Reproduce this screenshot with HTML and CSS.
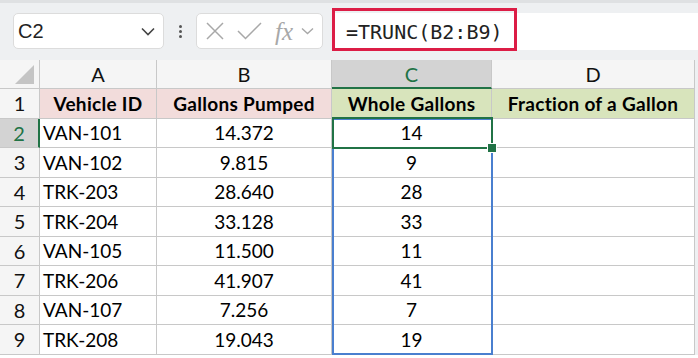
FILE: index.html
```
<!DOCTYPE html>
<html lang="en">
<head>
    <meta charset="UTF-8">
    <title>TRUNC</title>
    <link rel="stylesheet" href="styles.css">
</head>
<body>
    <div class="toolbar">
        <div class="namebox">
            <span>C2</span>
            <svg class="chev" width="14" height="9" viewBox="0 0 14 9"><path d="M1 1.5 L7 7.5 L13 1.5" fill="none" stroke="#444" stroke-width="1.6"/></svg>
        </div>
        <div class="dots"><i></i><i></i><i></i></div>
        <div class="fnbox">
            <svg width="20" height="20" viewBox="0 0 20 20"><path d="M2 2 L18 18 M18 2 L2 18" stroke="#a8a8a8" stroke-width="1.5"/></svg>
            <svg width="25" height="20" viewBox="0 0 25 20"><path d="M1 10 L8.5 17.5 L24 2" fill="none" stroke="#a8a8a8" stroke-width="1.5"/></svg>
            <span class="fx">fx</span>
            <svg width="13" height="8" viewBox="0 0 13 8"><path d="M1 1.5 L6.5 6.5 L12 1.5" fill="none" stroke="#a8a8a8" stroke-width="1.4"/></svg>
        </div>
        <div class="formula">
            <span>=TRUNC(B2:B9)</span>
            <div class="hl"></div>
        </div>
    </div>

    <div class="sheet">
        <div class="corner"><svg width="22" height="22" viewBox="0 0 22 22"><path d="M20 1 L20 20 L1 20 Z" fill="#c4c4c4"/></svg></div>
        <div class="colhd">A</div>
        <div class="colhd">B</div>
        <div class="colhd sel">C</div>
        <div class="colhd">D</div>
        <div class="filler"></div>

        <div class="rowhd">1</div>
        <div class="cell th pink">Vehicle ID</div>
        <div class="cell th pink">Gallons Pumped</div>
        <div class="cell th green">Whole Gallons</div>
        <div class="cell th green">Fraction of a Gallon</div>
        <div class="filler"></div>

        <div class="rowhd sel">2</div>
        <div class="cell l">VAN-101</div>
        <div class="cell">14.372</div>
        <div class="cell">14</div>
        <div class="cell"></div>
        <div class="filler"></div>

        <div class="rowhd">3</div>
        <div class="cell l">VAN-102</div>
        <div class="cell">9.815</div>
        <div class="cell">9</div>
        <div class="cell"></div>
        <div class="filler"></div>

        <div class="rowhd">4</div>
        <div class="cell l">TRK-203</div>
        <div class="cell">28.640</div>
        <div class="cell">28</div>
        <div class="cell"></div>
        <div class="filler"></div>

        <div class="rowhd">5</div>
        <div class="cell l">TRK-204</div>
        <div class="cell">33.128</div>
        <div class="cell">33</div>
        <div class="cell"></div>
        <div class="filler"></div>

        <div class="rowhd">6</div>
        <div class="cell l">VAN-105</div>
        <div class="cell">11.500</div>
        <div class="cell">11</div>
        <div class="cell"></div>
        <div class="filler"></div>

        <div class="rowhd">7</div>
        <div class="cell l">TRK-206</div>
        <div class="cell">41.907</div>
        <div class="cell">41</div>
        <div class="cell"></div>
        <div class="filler"></div>

        <div class="rowhd">8</div>
        <div class="cell l">VAN-107</div>
        <div class="cell">7.256</div>
        <div class="cell">7</div>
        <div class="cell"></div>
        <div class="filler"></div>

        <div class="rowhd">9</div>
        <div class="cell l">TRK-208</div>
        <div class="cell">19.043</div>
        <div class="cell">19</div>
        <div class="cell"></div>
        <div class="filler"></div>

        <div class="spill"></div>
        <div class="active"><b></b></div>
    </div>
</body>
</html>
```

FILE: styles.css
```
*{
    margin: 0;
    padding: 0;
    box-sizing: border-box;
}
body{
    width: 698px;
    height: 358px;
    overflow: hidden;
    background: #fff;
    font-family: Lato, "Open Sans", sans-serif;
    color: #000;
}
.toolbar{
    height: 60px;
    background: #eef0f2;
    border-top: 3px solid #dfe1e3;
    display: flex;
    align-items: flex-start;
    padding: 10px 0 0 13px;
}
.namebox{
    width: 151px;
    height: 36px;
    background: #fff;
    border: 1px solid #dcdcdc;
    border-radius: 5px;
    display: flex;
    align-items: center;
    justify-content: space-between;
    padding: 0 8px 0 4px;
    font-family: "Liberation Sans", sans-serif;
    font-size: 20px;
    color: #222;
}
.dots{
    width: 32px;
    height: 36px;
    display: flex;
    flex-direction: column;
    align-items: center;
    justify-content: center;
    gap: 2px;
}
.dots i{
    width: 3px;
    height: 3px;
    border-radius: 50%;
    background: #555;
}
.fnbox{
    width: 127px;
    height: 36px;
    background: #fff;
    border: 1px solid #dcdcdc;
    border-radius: 5px;
    display: flex;
    align-items: center;
    padding: 0 0 0 8px;
    gap: 12px;
}
.fx{
    font-family: "Liberation Serif", serif;
    font-style: italic;
    font-size: 25px;
    color: #a8a8a8;
    margin-left: 1px;
    margin-right: -4px;
    line-height: 1;
}
.formula{
    position: relative;
    margin-left: 9px;
    flex: 1;
    height: 37px;
    background: #fff;
    display: flex;
    align-items: center;
    padding-left: 14px;
    font-family: "DejaVu Sans Mono", monospace;
    font-size: 20px;
    color: #222;
}
.hl{
    position: absolute;
    left: 0;
    top: -5px;
    width: 185px;
    height: 43px;
    border: 3px solid #dc1d46;
}
.sheet{
    position: relative;
    display: grid;
    grid-template-columns: 40px 117px 175px 160px 203px 3px;
    grid-template-rows: 29px repeat(9, 29.5px);
    font-size: 19px;
}
.corner{
    background: #f5f5f5;
    border-right: 1px solid #c8c8c8;
    border-bottom: 1px solid #c8c8c8;
    display: flex;
    align-items: flex-end;
    justify-content: flex-end;
    padding: 0 3px 2px 0;
}
.colhd{
    background: #f5f5f5;
    border-right: 1px solid #c8c8c8;
    border-bottom: 1px solid #c8c8c8;
    display: flex;
    align-items: center;
    justify-content: center;
    font-size: 20px;
    color: #111;
}
.colhd.sel{
    background: #d3d3d3;
    color: #217346;
    border-bottom: 2px solid #217346;
}
.rowhd{
    background: #f5f5f5;
    border-right: 1px solid #c8c8c8;
    border-bottom: 1px solid #c8c8c8;
    display: flex;
    align-items: center;
    justify-content: center;
    font-size: 20px;
    color: #111;
}
.rowhd.sel{
    background: #d3d3d3;
    color: #217346;
    border-right: 2px solid #217346;
}
.filler{
    background: #eef0f2;
}
.cell{
    border-right: 1px solid #c8c8c8;
    border-bottom: 1px solid #c8c8c8;
    display: flex;
    align-items: center;
    justify-content: center;
    white-space: nowrap;
}
.cell.l{
    justify-content: flex-start;
    padding-left: 3px;
}
.th{
    font-weight: bold;
    letter-spacing: 0.3px;
}
.pink{
    background: #f2dcdb;
}
.green{
    background: #d8e4bc;
}
.spill{
    position: absolute;
    left: 332px;
    top: 58px;
    width: 161px;
    height: 237px;
    border: 2px solid #4a7fcf;
    pointer-events: none;
}
.active{
    position: absolute;
    left: 332px;
    top: 57px;
    width: 161px;
    height: 32px;
    border: 2px solid #217346;
}
.active b{
    position: absolute;
    right: -6px;
    bottom: -6px;
    width: 10px;
    height: 10px;
    background: #217346;
    border: 1px solid #fff;
}
```
